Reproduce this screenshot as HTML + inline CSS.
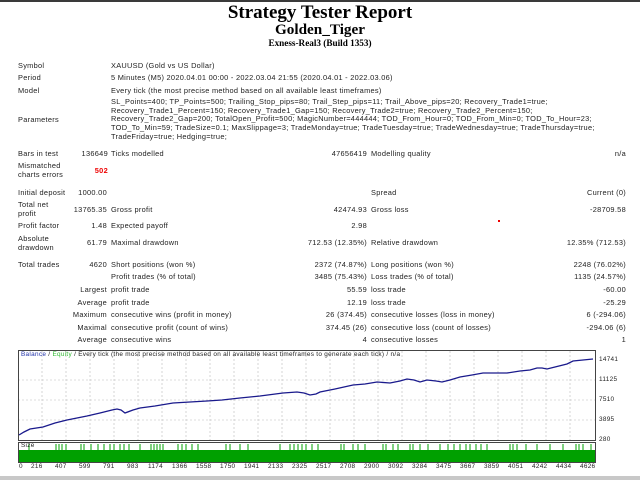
<!DOCTYPE html>
<html><head><meta charset="utf-8"><style>
html,body{margin:0;padding:0;width:640px;height:480px;overflow:hidden;background:#fff;position:relative}
div{position:absolute;white-space:nowrap;font-family:"Liberation Sans","DejaVu Sans",sans-serif;font-size:7.4px;letter-spacing:0.28px;line-height:8px;color:#222}
.h{font-family:"Liberation Serif",serif;font-weight:bold;color:#000;width:640px;text-align:center;left:0;letter-spacing:0}
.r{text-align:right;letter-spacing:0.3px}
.s{font-size:6.4px;letter-spacing:0.3px}
</style></head><body>
<div style="left:0;top:0;width:640px;height:2px;background:#3a3a3a"></div>
<div class="h" style="top:2px;font-size:19px;line-height:22px">Strategy Tester Report</div>
<div class="h" style="top:21px;font-size:15.2px;line-height:18px">Golden_Tiger</div>
<div class="h" style="top:38px;font-size:9.2px;line-height:11px">Exness-Real3 (Build 1353)</div>

<div style="left:18px;top:62px">Symbol</div><div style="left:111px;top:62px">XAUUSD (Gold vs US Dollar)</div>
<div style="left:18px;top:74px">Period</div><div style="left:111px;top:74px">5 Minutes (M5) 2020.04.01 00:00 - 2022.03.04 21:55 (2020.04.01 - 2022.03.06)</div>
<div style="left:18px;top:87px">Model</div><div style="left:111px;top:87px">Every tick (the most precise method based on all available least timeframes)</div>
<div style="left:18px;top:116px">Parameters</div>
<div style="left:111px;top:98px;line-height:8.7px">SL_Points=400; TP_Points=500; Trailing_Stop_pips=80; Trail_Step_pips=11; Trail_Above_pips=20; Recovery_Trade1=true;<br>Recovery_Trade1_Percent=150; Recovery_Trade1_Gap=150; Recovery_Trade2=true; Recovery_Trade2_Percent=150;<br>Recovery_Trade2_Gap=200; TotalOpen_Profit=500; MagicNumber=444444; TOD_From_Hour=0; TOD_From_Min=0; TOD_To_Hour=23;<br>TOD_To_Min=59; TradeSize=0.1; MaxSlippage=3; TradeMonday=true; TradeTuesday=true; TradeWednesday=true; TradeThursday=true;<br>TradeFriday=true; Hedging=true;</div>

<div style="left:18px;top:150px">Bars in test</div><div class="r" style="right:532px;top:150px">136649</div><div style="left:111px;top:150px">Ticks modelled</div><div class="r" style="right:273px;top:150px">47656419</div><div style="left:371px;top:150px">Modelling quality</div><div class="r" style="right:14px;top:150px">n/a</div>
<div style="left:18px;top:161px;line-height:9px">Mismatched<br>charts errors</div><div class="r" style="right:532px;top:167px;color:#e00;font-weight:bold">502</div>

<div style="left:18px;top:189px">Initial deposit</div><div class="r" style="right:533px;top:189px">1000.00</div><div style="left:371px;top:189px">Spread</div><div class="r" style="right:14px;top:189px">Current (0)</div>
<div style="left:18px;top:201px;line-height:8.5px">Total net<br>profit</div><div class="r" style="right:533px;top:206px">13765.35</div><div style="left:111px;top:206px">Gross profit</div><div class="r" style="right:273px;top:206px">42474.93</div><div style="left:371px;top:206px">Gross loss</div><div class="r" style="right:14px;top:206px">-28709.58</div>
<div style="left:498px;top:220px;width:2px;height:2px;background:#e00"></div>
<div style="left:18px;top:222px">Profit factor</div><div class="r" style="right:533px;top:222px">1.48</div><div style="left:111px;top:222px">Expected payoff</div><div class="r" style="right:273px;top:222px">2.98</div>
<div style="left:18px;top:235px;line-height:8.5px">Absolute<br>drawdown</div><div class="r" style="right:533px;top:239px">61.79</div><div style="left:111px;top:239px">Maximal drawdown</div><div class="r" style="right:273px;top:239px">712.53 (12.35%)</div><div style="left:371px;top:239px">Relative drawdown</div><div class="r" style="right:14px;top:239px">12.35% (712.53)</div>

<div style="left:18px;top:261px">Total trades</div><div class="r" style="right:533px;top:261px">4620</div><div style="left:111px;top:261px">Short positions (won %)</div><div class="r" style="right:273px;top:261px">2372 (74.87%)</div><div style="left:371px;top:261px">Long positions (won %)</div><div class="r" style="right:14px;top:261px">2248 (76.02%)</div>
<div style="left:111px;top:273px">Profit trades (% of total)</div><div class="r" style="right:273px;top:273px">3485 (75.43%)</div><div style="left:371px;top:273px">Loss trades (% of total)</div><div class="r" style="right:14px;top:273px">1135 (24.57%)</div>
<div class="r" style="right:533px;top:286px">Largest</div><div style="left:111px;top:286px">profit trade</div><div class="r" style="right:273px;top:286px">55.59</div><div style="left:371px;top:286px">loss trade</div><div class="r" style="right:14px;top:286px">-60.00</div>
<div class="r" style="right:533px;top:299px">Average</div><div style="left:111px;top:299px">profit trade</div><div class="r" style="right:273px;top:299px">12.19</div><div style="left:371px;top:299px">loss trade</div><div class="r" style="right:14px;top:299px">-25.29</div>
<div class="r" style="right:533px;top:311px">Maximum</div><div style="left:111px;top:311px">consecutive wins (profit in money)</div><div class="r" style="right:273px;top:311px">26 (374.45)</div><div style="left:371px;top:311px">consecutive losses (loss in money)</div><div class="r" style="right:14px;top:311px">6 (-294.06)</div>
<div class="r" style="right:533px;top:324px">Maximal</div><div style="left:111px;top:324px">consecutive profit (count of wins)</div><div class="r" style="right:273px;top:324px">374.45 (26)</div><div style="left:371px;top:324px">consecutive loss (count of losses)</div><div class="r" style="right:14px;top:324px">-294.06 (6)</div>
<div class="r" style="right:533px;top:336px">Average</div><div style="left:111px;top:336px">consecutive wins</div><div class="r" style="right:273px;top:336px">4</div><div style="left:371px;top:336px">consecutive losses</div><div class="r" style="right:14px;top:336px">1</div>

<svg style="position:absolute;left:0;top:0" width="640" height="480">
<g stroke="#bbb" stroke-width="0.6" stroke-dasharray="2,2">
<line x1="18" y1="380" x2="595" y2="380"/><line x1="18" y1="400" x2="595" y2="400"/><line x1="18" y1="420" x2="595" y2="420"/>
<line x1="42" y1="351" x2="42" y2="440"/><line x1="66" y1="351" x2="66" y2="440"/><line x1="90" y1="351" x2="90" y2="440"/><line x1="114" y1="351" x2="114" y2="440"/><line x1="138" y1="351" x2="138" y2="440"/><line x1="162" y1="351" x2="162" y2="440"/><line x1="186" y1="351" x2="186" y2="440"/><line x1="210" y1="351" x2="210" y2="440"/><line x1="234" y1="351" x2="234" y2="440"/><line x1="258" y1="351" x2="258" y2="440"/><line x1="282" y1="351" x2="282" y2="440"/><line x1="306" y1="351" x2="306" y2="440"/><line x1="330" y1="351" x2="330" y2="440"/><line x1="354" y1="351" x2="354" y2="440"/><line x1="378" y1="351" x2="378" y2="440"/><line x1="402" y1="351" x2="402" y2="440"/><line x1="426" y1="351" x2="426" y2="440"/><line x1="450" y1="351" x2="450" y2="440"/><line x1="474" y1="351" x2="474" y2="440"/><line x1="498" y1="351" x2="498" y2="440"/><line x1="522" y1="351" x2="522" y2="440"/><line x1="546" y1="351" x2="546" y2="440"/><line x1="570" y1="351" x2="570" y2="440"/>
</g>
<rect x="18.5" y="350.5" width="577" height="90" fill="none" stroke="#444" stroke-width="1"/>
<rect x="18.5" y="442.5" width="577" height="20" fill="none" stroke="#444" stroke-width="1"/>
<polyline fill="none" stroke="#1a1a8c" stroke-width="1.3" points="19,435 24,432 30,429 43,427 55,423 67,420 77,418 87,416 100,413 112,410 117,409 121,410 125,413 133,410 140,408 155,406 173,403 190,402 207,401 222,400 240,398 260,396 283,393 297,392 304,393 310,395 316,394 320,392 335,389 353,385 365,384 377,382 390,383 400,381 407,379 414,380 420,382 427,380 436,381 442,382 450,380 460,377 472,375 483,373 495,373 507,373 520,371 530,370 537,368 542,368 547,369 555,367 567,364 573,361 583,360 593,359"/>
<rect x="19" y="450" width="576" height="12" fill="#00a000"/>
<g stroke="#00a000" stroke-width="1">
<line x1="29" y1="444" x2="29" y2="450"/><line x1="56" y1="444" x2="56" y2="450"/><line x1="59" y1="444" x2="59" y2="450"/><line x1="62" y1="444" x2="62" y2="450"/><line x1="66" y1="444" x2="66" y2="450"/><line x1="81" y1="444" x2="81" y2="450"/><line x1="84" y1="444" x2="84" y2="450"/><line x1="91" y1="444" x2="91" y2="450"/><line x1="98" y1="444" x2="98" y2="450"/><line x1="104" y1="444" x2="104" y2="450"/><line x1="110" y1="444" x2="110" y2="450"/><line x1="114" y1="444" x2="114" y2="450"/><line x1="120" y1="444" x2="120" y2="450"/><line x1="124" y1="444" x2="124" y2="450"/><line x1="129" y1="444" x2="129" y2="450"/><line x1="140" y1="444" x2="140" y2="450"/><line x1="151" y1="444" x2="151" y2="450"/><line x1="154" y1="444" x2="154" y2="450"/><line x1="157" y1="444" x2="157" y2="450"/><line x1="160" y1="444" x2="160" y2="450"/><line x1="163" y1="444" x2="163" y2="450"/><line x1="178" y1="444" x2="178" y2="450"/><line x1="182" y1="444" x2="182" y2="450"/><line x1="186" y1="444" x2="186" y2="450"/><line x1="192" y1="444" x2="192" y2="450"/><line x1="198" y1="444" x2="198" y2="450"/><line x1="226" y1="444" x2="226" y2="450"/><line x1="230" y1="444" x2="230" y2="450"/><line x1="240" y1="444" x2="240" y2="450"/><line x1="248" y1="444" x2="248" y2="450"/><line x1="280" y1="444" x2="280" y2="450"/><line x1="290" y1="444" x2="290" y2="450"/><line x1="294" y1="444" x2="294" y2="450"/><line x1="298" y1="444" x2="298" y2="450"/><line x1="302" y1="444" x2="302" y2="450"/><line x1="306" y1="444" x2="306" y2="450"/><line x1="312" y1="444" x2="312" y2="450"/><line x1="318" y1="444" x2="318" y2="450"/><line x1="341" y1="444" x2="341" y2="450"/><line x1="344" y1="444" x2="344" y2="450"/><line x1="353" y1="444" x2="353" y2="450"/><line x1="358" y1="444" x2="358" y2="450"/><line x1="365" y1="444" x2="365" y2="450"/><line x1="383" y1="444" x2="383" y2="450"/><line x1="386" y1="444" x2="386" y2="450"/><line x1="393" y1="444" x2="393" y2="450"/><line x1="398" y1="444" x2="398" y2="450"/><line x1="410" y1="444" x2="410" y2="450"/><line x1="413" y1="444" x2="413" y2="450"/><line x1="420" y1="444" x2="420" y2="450"/><line x1="428" y1="444" x2="428" y2="450"/><line x1="440" y1="444" x2="440" y2="450"/><line x1="448" y1="444" x2="448" y2="450"/><line x1="454" y1="444" x2="454" y2="450"/><line x1="460" y1="444" x2="460" y2="450"/><line x1="466" y1="444" x2="466" y2="450"/><line x1="470" y1="444" x2="470" y2="450"/><line x1="476" y1="444" x2="476" y2="450"/><line x1="481" y1="444" x2="481" y2="450"/><line x1="487" y1="444" x2="487" y2="450"/><line x1="510" y1="444" x2="510" y2="450"/><line x1="513" y1="444" x2="513" y2="450"/><line x1="517" y1="444" x2="517" y2="450"/><line x1="526" y1="444" x2="526" y2="450"/><line x1="537" y1="444" x2="537" y2="450"/><line x1="550" y1="444" x2="550" y2="450"/><line x1="563" y1="444" x2="563" y2="450"/><line x1="576" y1="444" x2="576" y2="450"/><line x1="579" y1="444" x2="579" y2="450"/><line x1="583" y1="444" x2="583" y2="450"/><line x1="591" y1="444" x2="591" y2="450"/>
</g>
<rect x="0" y="476" width="640" height="4" fill="#c8c8c8"/>
</svg>
<div class="s" style="left:21px;top:351px"><span style="color:#2233aa">Balance</span> / <span style="color:#33bb33">Equity</span> / Every tick (the most precise method based on all available least timeframes to generate each tick) / n/a</div>
<div class="s" style="left:21px;top:442px">Size</div>
<div class="s" style="left:599px;top:356px">14741</div>
<div class="s" style="left:599px;top:376px">11125</div>
<div class="s" style="left:599px;top:396px">7510</div>
<div class="s" style="left:599px;top:416px">3895</div>
<div class="s" style="left:599px;top:436px">280</div>
<div class="s" style="left:0;top:463px;width:640px">
<span style="position:absolute;left:19px">0</span><span style="position:absolute;left:31px">216</span><span style="position:absolute;left:55px">407</span><span style="position:absolute;left:79px">599</span><span style="position:absolute;left:103px">791</span><span style="position:absolute;left:127px">983</span><span style="position:absolute;left:148px">1174</span><span style="position:absolute;left:172px">1366</span><span style="position:absolute;left:196px">1558</span><span style="position:absolute;left:220px">1750</span><span style="position:absolute;left:244px">1941</span><span style="position:absolute;left:268px">2133</span><span style="position:absolute;left:292px">2325</span><span style="position:absolute;left:316px">2517</span><span style="position:absolute;left:340px">2708</span><span style="position:absolute;left:364px">2900</span><span style="position:absolute;left:388px">3092</span><span style="position:absolute;left:412px">3284</span><span style="position:absolute;left:436px">3475</span><span style="position:absolute;left:460px">3667</span><span style="position:absolute;left:484px">3859</span><span style="position:absolute;left:508px">4051</span><span style="position:absolute;left:532px">4242</span><span style="position:absolute;left:556px">4434</span><span style="position:absolute;left:580px">4626</span>
</div>
</body></html>
